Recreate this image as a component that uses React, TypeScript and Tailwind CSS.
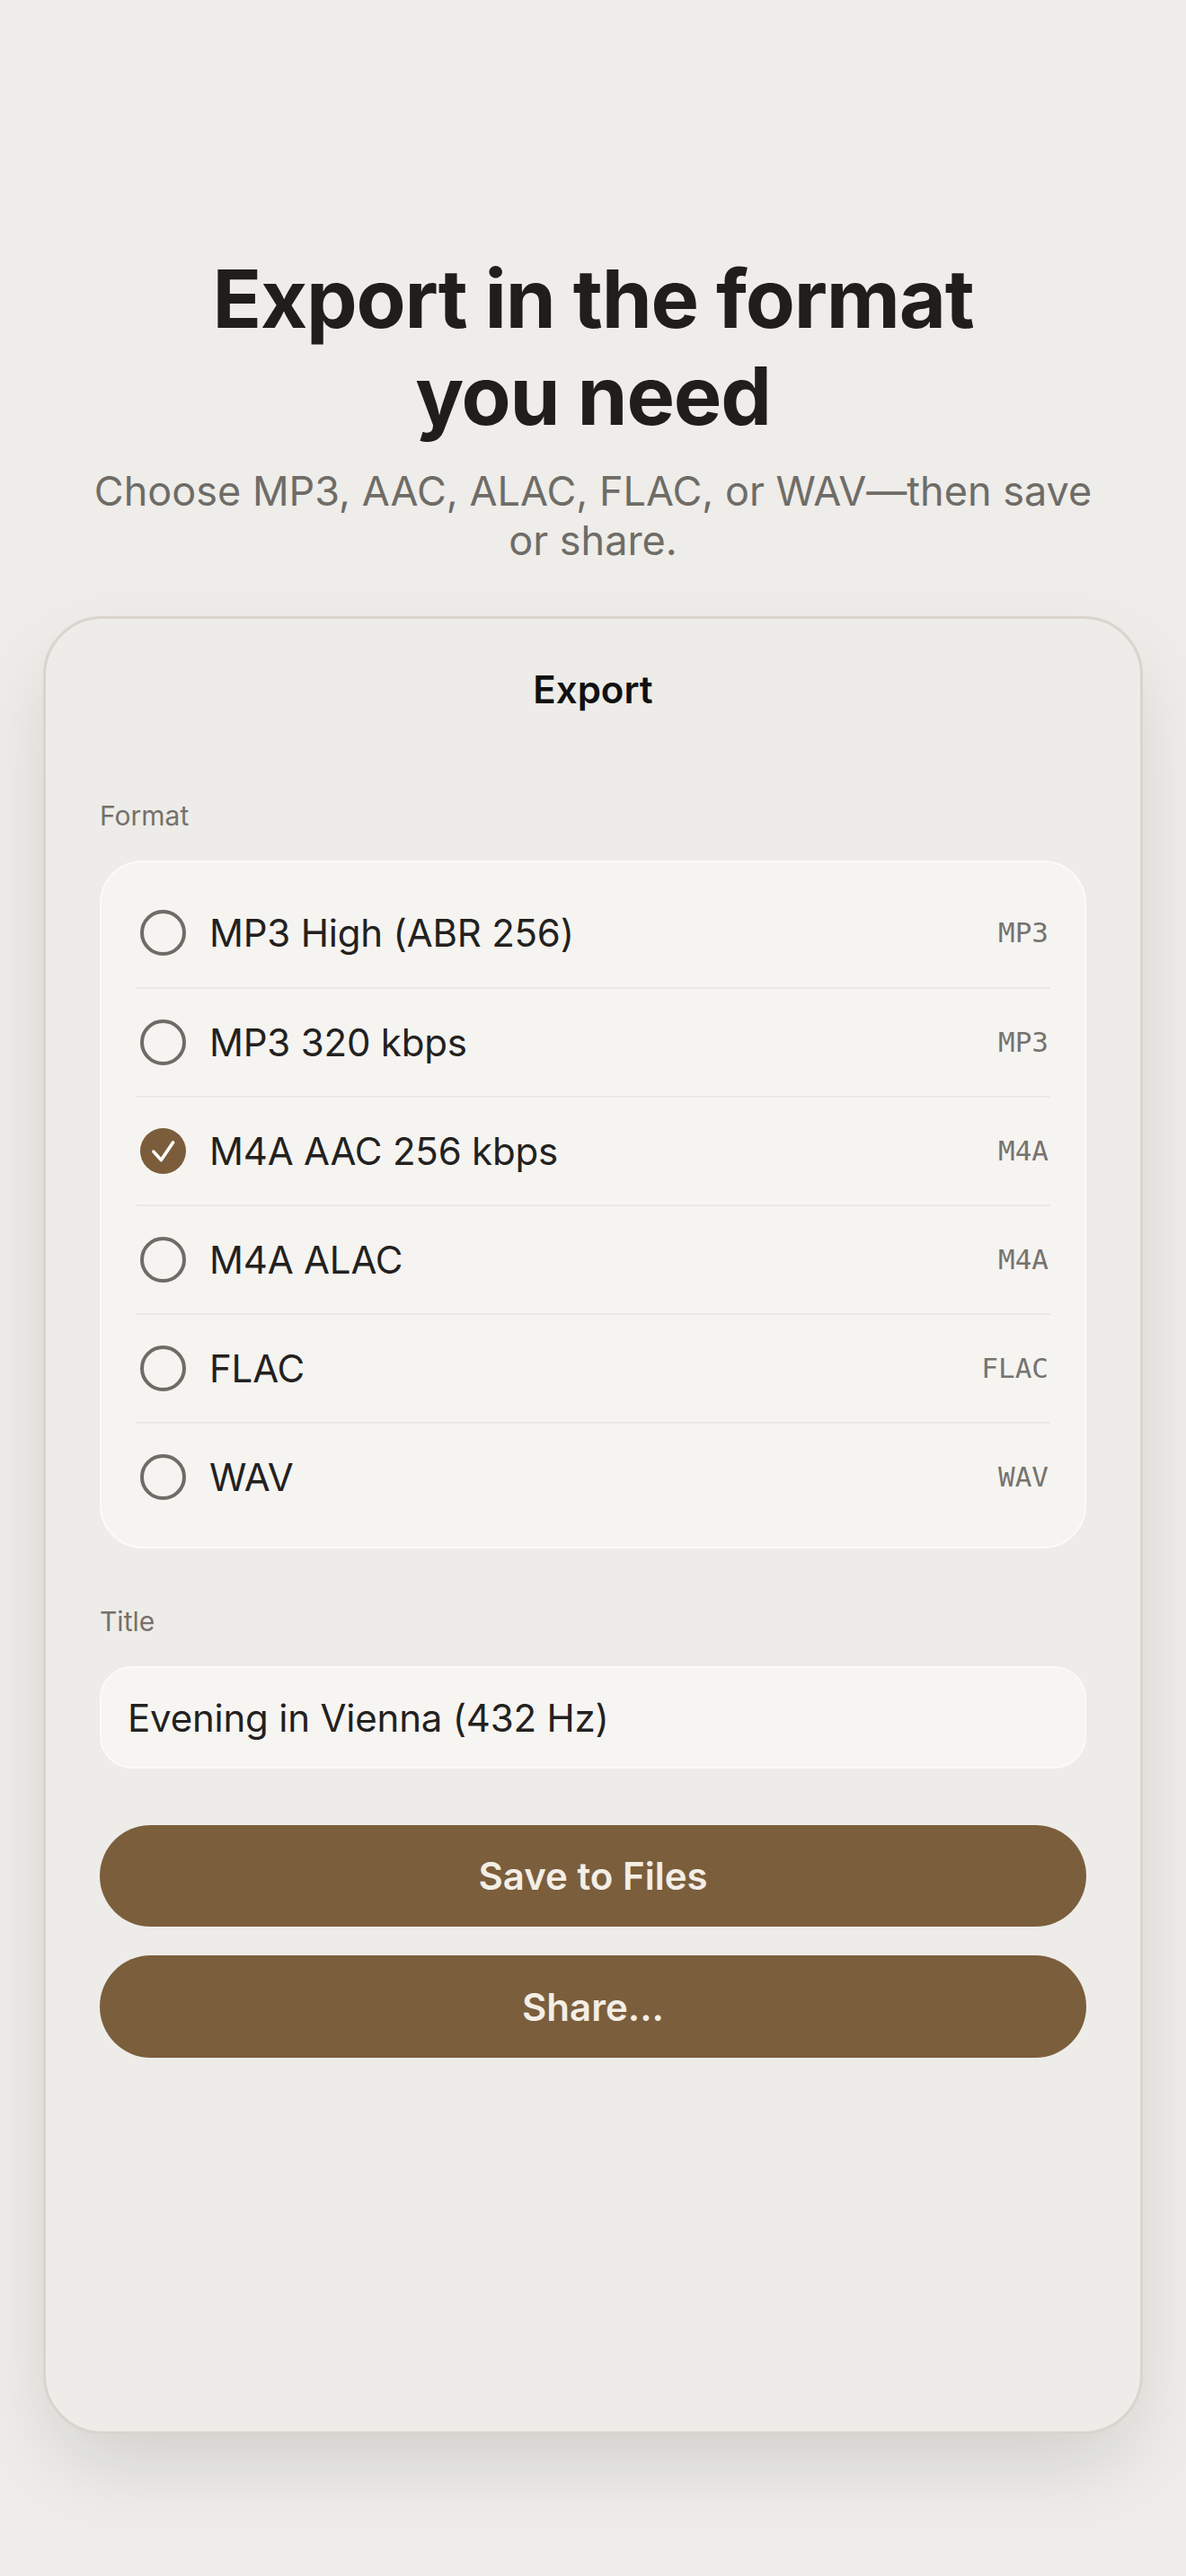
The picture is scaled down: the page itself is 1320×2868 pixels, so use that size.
const formats = [
  { name: 'MP3 High (ABR 256)', tag: 'MP3' },
  { name: 'MP3 320 kbps', tag: 'MP3' },
  { name: 'M4A AAC 256 kbps', tag: 'M4A' },
  { name: 'M4A ALAC', tag: 'M4A' },
  { name: 'FLAC', tag: 'FLAC' },
  { name: 'WAV', tag: 'WAV' },
];

const selected = 2;

function Radio({ checked }: { checked: boolean }) {
  if (checked) {
    return (
      <span className="ml-[5px] flex h-[51px] w-[51px] shrink-0 items-center justify-center rounded-full bg-[#7b5d3b]">
        <svg viewBox="0 0 24 24" className="h-[51px] w-[51px]" fill="none" stroke="#ffffff" strokeWidth="1.7" strokeLinecap="round" strokeLinejoin="round">
          <path d="M7 12.3l4 4.4 6.2-9.2" />
        </svg>
      </span>
    );
  }
  return <span className="ml-[5px] h-[51px] w-[51px] shrink-0 rounded-full border-[4px] border-[#6f6b66]" />;
}

export default function App() {
  return (
    <div className="min-h-[2868px] bg-[#eeede9] font-['Inter',sans-serif] text-[#1f1e1b]">
      <div className="px-[48px] pt-[279px]">
        <h1 className="text-center text-[90px] font-bold leading-[108px] tracking-[-1.2px] text-[#1f1e1b]">
          Export in the format
          <br />
          you need
        </h1>
        <p className="mt-[24px] text-center text-[45px] leading-[55px] text-[#6f6c67]">
          Choose MP3, AAC, ALAC, FLAC, or WAV—then save
          <br />
          or share.
        </p>

        <div className="mt-[57px] h-[2024px] rounded-[66px] border-[3px] border-[#d9d4cd] bg-[#edece8] px-[60px] pt-[53px] shadow-[0_40px_90px_-10px_rgba(0,0,0,0.13)]">
          <h2 className="text-center text-[42px] font-semibold leading-[51px] text-[#111111]">Export</h2>

          <div className="mt-[97px] text-[30px] leading-[36px] text-[#75716b]">Format</div>
          <div className="mt-[32px] rounded-[48px] border-2 border-[#fbfaf8] bg-[#f5f4f1] px-[38px] py-[18px]">
            {formats.map((f, i) => (
              <div
                key={f.name}
                className={`flex h-[121px] items-center ${i > 0 ? 'border-t-2 border-[#ebe9e5]' : 'h-[119px]'}`}
              >
                <Radio checked={i === selected} />
                <span className="ml-[26px] flex-1 text-[42px] leading-[51px] tracking-[-0.2px] text-[#23211e]">{f.name}</span>
                <span className="pr-[2px] font-['DejaVu_Sans_Mono',monospace] text-[31px] text-[#77736e]">{f.tag}</span>
              </div>
            ))}
          </div>

          <div className="mt-[63px] text-[30px] leading-[36px] text-[#75716b]">Title</div>
          <div className="mt-[32px] flex h-[114px] items-center rounded-[36px] border-2 border-[#fbfaf8] bg-[#f6f5f2] px-[29px] text-[42px] tracking-[-0.2px] text-[#23211e]">
            Evening in Vienna (432 Hz)
          </div>

          <button className="mt-[63px] flex h-[113px] w-full items-center justify-center rounded-full bg-[#7b5e3c] text-[42px] font-semibold text-[#f3eee6]">
            Save to Files
          </button>
          <button className="mt-[32px] flex h-[114px] w-full items-center justify-center rounded-full bg-[#7b5e3c] text-[42px] font-semibold text-[#f3eee6]">
            Share...
          </button>
        </div>
      </div>
    </div>
  );
}
